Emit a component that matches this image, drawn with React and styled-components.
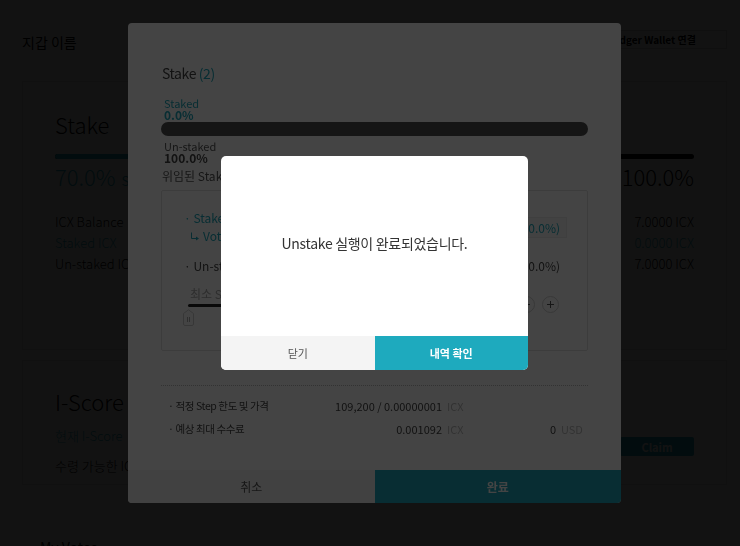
import React from 'react';
import styled, { createGlobalStyle } from 'styled-components';

const TEAL = '#1eaabe';
const FONT = '"Noto Sans CJK KR", "Noto Sans", sans-serif';

const GlobalStyle = createGlobalStyle`
  :root { color-scheme: only light; }
  html, body { margin: 0; padding: 0; background: #fff; }
  body { font-family: ${FONT}; color: #333; }
  *, *::before, *::after { box-sizing: border-box; }
  #root { width: 740px; height: 546px; overflow: hidden; position: relative; }
`;

/* ---------------- background wallet page ---------------- */
const Page = styled.div`
  position: relative;
  z-index: 0;
  width: 740px;
  height: 546px;
  overflow: hidden;
  background: #fff;
  color: #000;
  padding: 30px 13px 0 22px;
  display: flex;
  flex-direction: column;
`;
const Header = styled.header`
  display: flex;
  align-items: flex-start;
  justify-content: space-between;
  height: 20px;
`;
const WalletName = styled.h1`
  margin: 2px 0 0;
  font-size: 14px;
  font-weight: 400;
  line-height: 20px;
  color: #000;
`;
const LedgerButton = styled.button`
  width: 150px;
  height: 19px;
  border: 1px solid #ccc;
  background: #fff;
  font-family: inherit;
  font-size: 10px;
  font-weight: 700;
  color: #000;
  padding: 0;
`;
const Card = styled.section`
  border: 1px solid #ddd;
  margin-top: ${(p) => p.$mt}px;
  height: ${(p) => p.$h}px;
  padding: ${(p) => p.$pt}px 32px 0;
  flex-shrink: 0;
`;
const CardTitle = styled.h2`
  margin: 0;
  font-size: 22px;
  font-weight: 300;
  line-height: 30px;
  color: #000;
`;
const StakeBar = styled.div`
  margin-top: 15px;
  height: 5px;
  border-radius: 3px;
  background: #000;
  display: flex;
  overflow: hidden;
`;
const StakeFill = styled.div`
  background: ${TEAL};
  height: 100%;
`;
const PercentRow = styled.div`
  display: flex;
  justify-content: space-between;
  align-items: baseline;
  margin-top: 3px;
`;
const BigPercent = styled.span`
  font-size: 22px;
  line-height: 28px;
  font-weight: 300;
  color: ${(p) => (p.$teal ? TEAL : '#000')};
`;
const PercentCaption = styled.span`
  font-size: 13px;
  margin: 0 6px;
  color: ${(p) => (p.$teal ? TEAL : '#000')};
`;
const InfoList = styled.div`
  margin-top: 20px;
  display: flex;
  flex-direction: column;
`;
const InfoRow = styled.div`
  display: flex;
  justify-content: space-between;
  font-size: 13px;
  line-height: 21px;
  font-weight: 300;
  color: ${(p) => (p.$teal ? TEAL : '#000')};
`;
const ScoreBody = styled.div`
  display: flex;
  align-items: flex-start;
  justify-content: space-between;
  margin-top: 10px;
`;
const ScoreLines = styled.div`
  display: flex;
  flex-direction: column;
  gap: 10px;
  font-size: 13px;
  line-height: 20px;
  font-weight: 300;
`;
const ScoreLine = styled.span`
  color: ${(p) => (p.$teal ? TEAL : '#000')};
`;
const ClaimButton = styled.button`
  width: 74px;
  height: 19px;
  margin-top: 11px;
  border: 0;
  border-radius: 2px;
  background: ${TEAL};
  color: #fff;
  font-family: inherit;
  font-size: 11px;
  font-weight: 700;
  padding: 0;
`;
const SectionTitle = styled.h3`
  margin: 52px 0 0 18px;
  font-size: 14px;
  font-weight: 400;
  color: #000;
  line-height: 20px;
`;

/* ---------------- overlays ---------------- */
const Overlay = styled.div`
  position: fixed;
  inset: 0;
  z-index: ${(p) => p.$layer};
  background: rgba(0, 0, 0, 0.733);
  display: flex;
  align-items: center;
  justify-content: center;
  padding: 0 0 20px 9px;
`;

/* ---------------- stake modal ---------------- */
const StakeModal = styled.div`
  width: 493px;
  height: 480px;
  background: #fff;
  border-radius: 4px;
  overflow: hidden;
  display: flex;
  flex-direction: column;
`;
const ModalBody = styled.div`
  flex: 1;
  padding: 40px 33px 0;
  display: flex;
  flex-direction: column;
`;
const ModalTitle = styled.h2`
  margin: 0 0 0 1px;
  font-size: 14px;
  letter-spacing: -0.4px;
  font-weight: 400;
  line-height: 20px;
  color: #444;
`;
const Count = styled.span`
  color: ${TEAL};
`;
const StatLabel = styled.div`
  margin: ${(p) => p.$mt}px 0 0 3px;
  font-size: 11px;
  line-height: 12px;
  color: ${(p) => (p.$teal ? TEAL : '#555')};
`;
const StatValue = styled.div`
  margin-left: 3px;
  font-size: 12px;
  font-weight: 700;
  line-height: 12px;
  color: ${(p) => (p.$teal ? TEAL : '#444')};
`;
const ProgressTrack = styled.div`
  margin-top: 1px;
  height: 14px;
  border-radius: 7px;
  background: #4f4f4f;
`;
const DelegatedLabel = styled.div`
  margin: 5px 0 0 1px;
  font-size: 12px;
  line-height: 14px;
  color: #555;
`;
const DetailBox = styled.div`
  margin-top: 7px;
  height: 161px;
  border: 1px solid #e2e2e2;
  border-radius: 2px;
  padding: 19px 20px 0 22px;
  display: flex;
  flex-direction: column;
`;
const ItemRow = styled.div`
  display: flex;
  align-items: center;
  justify-content: space-between;
  margin-top: ${(p) => p.$mt || 0}px;
`;
const LabelCol = styled.div`
  display: flex;
  flex-direction: column;
  gap: 2px;
`;
const ItemLabel = styled.div`
  font-size: 12px;
  line-height: 16px;
  color: ${(p) => (p.$teal ? TEAL : '#444')};
  display: flex;
  align-items: center;
  gap: 3px;
  padding-left: ${(p) => (p.$indent ? 6 : 0)}px;
`;
const ValueCell = styled.div`
  height: 21px;
  padding: 0 6px;
  font-size: 12px;
  line-height: 19px;
  border: 1px solid ${(p) => (p.$boxed ? '#ececec' : 'transparent')};
  background: ${(p) => (p.$boxed ? '#f7f7f7' : 'transparent')};
  color: ${(p) => (p.$teal ? TEAL : '#444')};
`;
const MinLabel = styled.div`
  margin-top: 10px;
  padding-left: 6px;
  font-size: 12px;
  line-height: 16px;
  color: #aaa;
`;
const SliderRow = styled.div`
  display: flex;
  align-items: flex-start;
  gap: 7px;
  margin: -6px 8px 0 4px;
`;
const SliderTrack = styled.div`
  flex: 1;
  position: relative;
  height: 3px;
  margin-top: 8px;
  border-radius: 2px;
  background: #222;
`;
const Thumb = styled.svg`
  position: absolute;
  left: -5px;
  top: 5px;
`;
const RoundButton = styled.button`
  width: 17px;
  height: 17px;
  border-radius: 50%;
  border: 1px solid #d0d0d0;
  background: #fff;
  padding: 0;
  display: flex;
  align-items: center;
  justify-content: center;
`;
const Divider = styled.div`
  margin-top: 34px;
  border-top: 1px dotted #bbb;
`;
const FeeList = styled.div`
  margin-top: 12px;
  display: flex;
  flex-direction: column;
  gap: 7px;
  padding-left: 7px;
`;
const FeeRow = styled.div`
  display: flex;
  font-size: 11px;
  line-height: 16px;
  color: #444;
`;
const FeeLabel = styled.span`
  width: 160px;
  font-size: 10.5px;
  letter-spacing: -0.4px;
`;
const FeeValue = styled.span`
  width: ${(p) => p.$w}px;
  text-align: right;
`;
const FeeUnit = styled.span`
  width: ${(p) => p.$w || 22}px;
  margin-left: 5px;
  color: #bbb;
`;
const Footer = styled.div`
  display: flex;
  height: ${(p) => p.$h}px;
  flex-shrink: 0;
`;
const FooterButton = styled.button`
  flex: 1;
  border: 0;
  padding: 0;
  font-family: inherit;
  font-size: ${(p) => p.$fs}px;
  font-weight: ${(p) => (p.$primary ? 700 : 400)};
  background: ${(p) => (p.$primary ? TEAL : '#f4f4f4')};
  color: ${(p) => (p.$primary ? '#fff' : '#555')};
`;

/* ---------------- alert ---------------- */
const Alert = styled.div`
  width: 307px;
  height: 214px;
  background: #fff;
  border-radius: 5px;
  overflow: hidden;
  display: flex;
  flex-direction: column;
`;
const AlertMessage = styled.p`
  flex: 1;
  margin: 0;
  padding-bottom: 6px;
  display: flex;
  align-items: center;
  justify-content: center;
  font-size: 14px;
  letter-spacing: -0.3px;
  color: #333;
`;

const SubArrow = () => (
  <svg width="10" height="9" viewBox="0 0 10 9">
    <path d="M1.5 0.5 V6.5 H6" fill="none" stroke={TEAL} strokeWidth="1" />
    <path d="M6 4.5 L9 6.5 L6 8.5 Z" fill={TEAL} />
  </svg>
);

export default function App() {
  const stakedPct = 70;
  return (
    <>
      <GlobalStyle />
      <Page>
        <Header>
          <WalletName>지갑 이름</WalletName>
          <LedgerButton>Ledger Wallet 연결</LedgerButton>
        </Header>
        <Card $mt={31} $h={269} $pt={27}>
          <CardTitle>Stake</CardTitle>
          <StakeBar>
            <StakeFill style={{ width: `${stakedPct}%` }} />
          </StakeBar>
          <PercentRow>
            <span>
              <BigPercent $teal>70.0%</BigPercent>
              <PercentCaption $teal>Staked</PercentCaption>
            </span>
            <span>
              <PercentCaption>Un-staked</PercentCaption>
              <BigPercent>100.0%</BigPercent>
            </span>
          </PercentRow>
          <InfoList>
            <InfoRow><span>ICX Balance</span><span>7.0000 ICX</span></InfoRow>
            <InfoRow $teal><span>Staked ICX</span><span>0.0000 ICX</span></InfoRow>
            <InfoRow><span>Un-staked ICX</span><span>7.0000 ICX</span></InfoRow>
          </InfoList>
        </Card>
        <Card $mt={10} $h={125} $pt={25}>
          <CardTitle>I-Score</CardTitle>
          <ScoreBody>
            <ScoreLines>
              <ScoreLine $teal>현재 I-Score</ScoreLine>
              <ScoreLine>수령 가능한 ICX의 양</ScoreLine>
            </ScoreLines>
            <ClaimButton>Claim</ClaimButton>
          </ScoreBody>
        </Card>
        <SectionTitle>My Votes</SectionTitle>
      </Page>

      <Overlay $layer={10}>
        <StakeModal>
          <ModalBody>
            <ModalTitle>
              Stake <Count>(2)</Count>
            </ModalTitle>
            <StatLabel $mt={14} $teal>Staked</StatLabel>
            <StatValue $teal>0.0%</StatValue>
            <ProgressTrack />
            <StatLabel $mt={4}>Un-staked</StatLabel>
            <StatValue>100.0%</StatValue>
            <DelegatedLabel>위임된 Staked ICX</DelegatedLabel>
            <DetailBox>
              <ItemRow>
                <LabelCol>
                  <ItemLabel $teal>· Staked ICX</ItemLabel>
                  <ItemLabel $teal $indent>
                    <SubArrow /> Voting
                  </ItemLabel>
                </LabelCol>
                <ValueCell $boxed $teal>0 (0.0%)</ValueCell>
              </ItemRow>
              <ItemRow $mt={11}>
                <ItemLabel>· Un-staked ICX</ItemLabel>
                <ValueCell>7.0000 ICX (100.0%)</ValueCell>
              </ItemRow>
              <MinLabel>최소 Stake</MinLabel>
              <SliderRow>
                <SliderTrack>
                  <Thumb width="11" height="17" viewBox="0 0 11 17">
                    <path d="M0.5 4.5 L5.5 0.8 L10.5 4.5 V15 Q10.5 16.5 9 16.5 H2 Q0.5 16.5 0.5 15 Z" fill="#fff" stroke="#cfcfcf" />
                    <path d="M4.5 8 V13 M6.5 8 V13" stroke="#999" strokeWidth="0.8" />
                  </Thumb>
                </SliderTrack>
                <RoundButton aria-label="minus">
                  <svg width="9" height="9" viewBox="0 0 9 9">
                    <path d="M1 4.5 H8" stroke="#555" strokeWidth="1" />
                  </svg>
                </RoundButton>
                <RoundButton aria-label="plus">
                  <svg width="9" height="9" viewBox="0 0 9 9">
                    <path d="M1 4.5 H8 M4.5 1 V8" stroke="#555" strokeWidth="1" />
                  </svg>
                </RoundButton>
              </SliderRow>
            </DetailBox>
            <Divider />
            <FeeList>
              <FeeRow>
                <FeeLabel>· 적정 Step 한도 및 가격</FeeLabel>
                <FeeValue $w={114}>109,200 / 0.00000001</FeeValue>
                <FeeUnit>ICX</FeeUnit>
              </FeeRow>
              <FeeRow>
                <FeeLabel>· 예상 최대 수수료</FeeLabel>
                <FeeValue $w={114}>0.001092</FeeValue>
                <FeeUnit>ICX</FeeUnit>
                <FeeValue $w={87}>0</FeeValue>
                <FeeUnit $w={26}>USD</FeeUnit>
              </FeeRow>
            </FeeList>
          </ModalBody>
          <Footer $h={33}>
            <FooterButton $fs={12}>취소</FooterButton>
            <FooterButton $fs={12} $primary>완료</FooterButton>
          </Footer>
        </StakeModal>
      </Overlay>

      <Overlay $layer={20}>
        <Alert>
          <AlertMessage>Unstake 실행이 완료되었습니다.</AlertMessage>
          <Footer $h={34}>
            <FooterButton $fs={11}>닫기</FooterButton>
            <FooterButton $fs={11} $primary>내역 확인</FooterButton>
          </Footer>
        </Alert>
      </Overlay>
    </>
  );
}
